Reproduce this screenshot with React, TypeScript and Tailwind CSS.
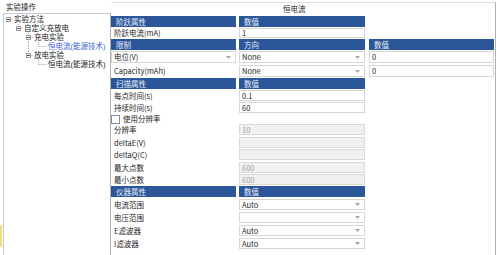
type Cell =
  | { kind: 'head'; text: string }
  | { kind: 'label'; text: string }
  | { kind: 'input'; text: string }
  | { kind: 'disabled'; text: string }
  | { kind: 'select'; text: string }
  | { kind: 'check'; text: string }
  | { kind: 'empty' };

type Row = { h: string; mb: string; cells: [Cell, Cell, Cell] };

const empty: Cell = { kind: 'empty' };

const rows: Row[] = [
  { h: 'h-[11px]', mb: 'mb-[1px]', cells: [{ kind: 'head', text: '阶跃属性' }, { kind: 'head', text: '数值' }, empty] },
  { h: 'h-[10px]', mb: 'mb-[1px]', cells: [{ kind: 'label', text: '阶跃电流(mA)' }, { kind: 'input', text: '1' }, empty] },
  {
    h: 'h-[11px]',
    mb: 'mb-[1px]',
    cells: [{ kind: 'head', text: '限制' }, { kind: 'head', text: '方向' }, { kind: 'head', text: '数值' }],
  },
  {
    h: 'h-[12px]',
    mb: 'mb-[2px]',
    cells: [{ kind: 'select', text: '电位(V)' }, { kind: 'select', text: 'None' }, { kind: 'input', text: '0' }],
  },
  {
    h: 'h-[12px]',
    mb: 'mb-[1px]',
    cells: [{ kind: 'label', text: 'Capacity(mAh)' }, { kind: 'select', text: 'None' }, { kind: 'input', text: '0' }],
  },
  { h: 'h-[11px]', mb: 'mb-[1px]', cells: [{ kind: 'head', text: '扫描属性' }, { kind: 'head', text: '数值' }, empty] },
  { h: 'h-[11px]', mb: 'mb-[1px]', cells: [{ kind: 'label', text: '每点时间(s)' }, { kind: 'input', text: '0.1' }, empty] },
  { h: 'h-[11px]', mb: 'mb-[1px]', cells: [{ kind: 'label', text: '持续时间(s)' }, { kind: 'input', text: '60' }, empty] },
  { h: 'h-[10px]', mb: 'mb-0', cells: [{ kind: 'check', text: '使用分辨率' }, empty, empty] },
  { h: 'h-[11px]', mb: 'mb-[2px]', cells: [{ kind: 'label', text: '分辨率' }, { kind: 'disabled', text: '10' }, empty] },
  { h: 'h-[11px]', mb: 'mb-[1px]', cells: [{ kind: 'label', text: 'deltaE(V)' }, { kind: 'disabled', text: '' }, empty] },
  { h: 'h-[11px]', mb: 'mb-[2px]', cells: [{ kind: 'label', text: 'deltaQ(C)' }, { kind: 'disabled', text: '' }, empty] },
  { h: 'h-[11px]', mb: 'mb-[1px]', cells: [{ kind: 'label', text: '最大点数' }, { kind: 'disabled', text: '600' }, empty] },
  { h: 'h-[11px]', mb: 'mb-[1px]', cells: [{ kind: 'label', text: '最小点数' }, { kind: 'disabled', text: '600' }, empty] },
  { h: 'h-[11px]', mb: 'mb-[2px]', cells: [{ kind: 'head', text: '仪器属性' }, { kind: 'head', text: '数值' }, empty] },
  { h: 'h-[11px]', mb: 'mb-[2px]', cells: [{ kind: 'label', text: '电流范围' }, { kind: 'select', text: 'Auto' }, empty] },
  { h: 'h-[11px]', mb: 'mb-[2px]', cells: [{ kind: 'label', text: '电压范围' }, { kind: 'select', text: '' }, empty] },
  { h: 'h-[11px]', mb: 'mb-[2px]', cells: [{ kind: 'label', text: 'E滤波器' }, { kind: 'select', text: 'Auto' }, empty] },
  { h: 'h-[11px]', mb: 'mb-[2px]', cells: [{ kind: 'label', text: 'I滤波器' }, { kind: 'select', text: 'Auto' }, empty] },
];

type TreeNode = { text: string; level: number; parent: boolean; last: boolean; selected?: boolean; through?: number[] };

const tree: TreeNode[] = [
  { text: '实验方法', level: 0, parent: true, last: true },
  { text: '自定义充放电', level: 1, parent: true, last: true },
  { text: '充电实验', level: 2, parent: true, last: false },
  { text: '恒电流(能源技术)', level: 3, parent: false, last: true, selected: true, through: [2] },
  { text: '放电实验', level: 2, parent: true, last: true },
  { text: '恒电流(能源技术)', level: 3, parent: false, last: true },
];

function Arrow() {
  return (
    <svg width="5" height="3" viewBox="0 0 5 3" className="shrink-0">
      <path d="M0 0h5L2.5 3z" fill="#a8a8a8" />
    </svg>
  );
}

function CellView({ cell, extra }: { cell: Cell; extra: string }) {
  if (cell.kind === 'head') {
    return <div className={`flex items-center bg-[#2b579a] pl-[5px] text-[#e9eff9] ${extra}`}>{cell.text}</div>;
  }
  if (cell.kind === 'label') {
    return <div className={`flex items-center pl-[3px] text-[#262626] ${extra}`}>{cell.text}</div>;
  }
  if (cell.kind === 'input') {
    return (
      <div className={`flex items-center border border-[#d6d6d6] bg-white pl-[2px] text-[#262626] ${extra}`}>
        {cell.text}
      </div>
    );
  }
  if (cell.kind === 'disabled') {
    return (
      <div className={`flex items-center border border-[#d9d9d9] bg-[#f0f0f0] pl-[2px] text-[#a3a3a3] ${extra}`}>
        {cell.text}
      </div>
    );
  }
  if (cell.kind === 'select') {
    return (
      <div
        className={`flex items-center justify-between border border-[#d6d6d6] bg-white pr-[4px] pl-[2px] text-[#262626] ${extra}`}
      >
        <span>{cell.text}</span>
        <Arrow />
      </div>
    );
  }
  if (cell.kind === 'check') {
    return (
      <div className={`flex items-center gap-[3px] text-[#262626] ${extra}`}>
        <span className="block h-[9px] w-[9px] border border-[#7d8fb3] bg-white" />
        <span>{cell.text}</span>
      </div>
    );
  }
  return <div className={extra} />;
}

function TreeRow({ node }: { node: TreeNode }) {
  const c = 4.5 + 10 * node.level;
  const width = node.parent ? 9 + 10 * node.level : 13 + 10 * node.level;
  const dash = '1 1';
  const line = '#a6a6a6';

  return (
    <div className="flex h-[9px] items-center">
      <svg width={width} height="9" className="shrink-0">
        {(node.through ?? []).map((lvl) => (
          <line key={lvl} x1={4.5 + 10 * lvl} y1="0" x2={4.5 + 10 * lvl} y2="9" stroke={line} strokeDasharray={dash} />
        ))}
        {node.level > 0 ? (
          <line x1={c} y1="0" x2={c} y2={node.last ? 4.5 : 9} stroke={line} strokeDasharray={dash} />
        ) : null}
        <line x1={c} y1="4.5" x2={width} y2="4.5" stroke={line} strokeDasharray={dash} />
        {node.parent ? (
          <>
            <rect x={c - 2} y="2.5" width="4" height="4" fill="white" stroke="#9b9b9b" />
            <line x1={c - 1.5} y1="4.5" x2={c + 1.5} y2="4.5" stroke="#555" />
          </>
        ) : null}
      </svg>
      <span
        className={`block h-[9px] whitespace-nowrap pl-[1px] leading-[9px] ${node.selected ? 'text-[#3d5fd8]' : 'text-[#222]'}`}
      >
        {node.text}
      </span>
    </div>
  );
}

export default function App() {
  return (
    <div className="flex h-[255px] w-[498px] overflow-hidden bg-white text-[7.5px] leading-none [font-family:'Noto_Sans_CJK_SC','Liberation_Sans',sans-serif]">
      <div className="flex w-[3px] flex-col">
        <div className="mt-[225px] h-[22px] w-[2px] bg-[#f3dd74]" />
      </div>

      <div className="flex w-[108px] flex-col">
        <div className="flex h-[13px] items-center pl-[3px] text-[#222]">实验操作</div>
        <div className="flex-1 border border-b-0 border-l-[#c9c9d6] border-r-[#b2b2b2] border-t-[#c9c9d6] bg-white pt-[1px] [font-family:'Liberation_Sans','Noto_Sans_CJK_SC',sans-serif]">
          {tree.map((node, i) => (
            <TreeRow key={i} node={node} />
          ))}
        </div>
      </div>

      <div className="mt-[2px] flex w-[385px] flex-col border-t border-r border-t-[#dedede] border-r-[#b0b0b0]">
        <div className="flex h-[11px] items-center pl-[172px] text-[#222]">恒电流</div>
        <div className="flex flex-col pt-[2px]">
          {rows.map((row, i) => (
            <div key={i} className={`flex ${row.h} ${row.mb}`}>
              <CellView cell={row.cells[0]} extra="w-[125px]" />
              <CellView cell={row.cells[1]} extra="ml-[3px] w-[126px]" />
              <CellView cell={row.cells[2]} extra="ml-[4px] w-[125px]" />
            </div>
          ))}
        </div>
      </div>
    </div>
  );
}
